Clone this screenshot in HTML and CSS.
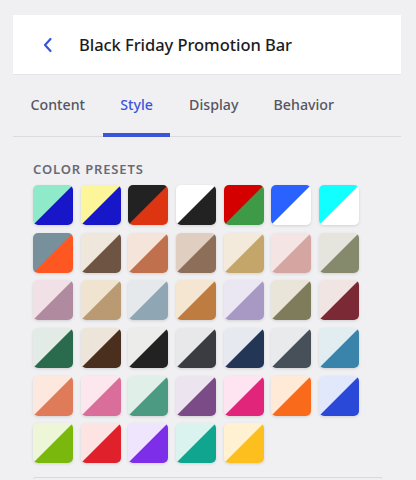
FILE: index.html
```html
<!DOCTYPE html>
<html>
<head>
<meta charset="utf-8">
<link rel="stylesheet" href="styles.css">
</head>
<body>
<div class="header">
  <svg class="back" width="12" height="16" viewBox="0 0 12 16"><path d="M8.5 2 L3 8 L8.5 14" fill="none" stroke="#3b55d9" stroke-width="2.2" stroke-linecap="round" stroke-linejoin="round"/></svg>
  <h1 class="title">Black Friday Promotion Bar</h1>
</div>
<div class="tabs">
  <div class="tab">Content</div>
  <div class="tab active">Style</div>
  <div class="tab">Display</div>
  <div class="tab">Behavior</div>
</div>
<div class="section">
  <div class="label">COLOR PRESETS</div>
  <div class="grid">
    <div class="sw" style="--a:#8eeac9;--b:#1717c9"></div>
    <div class="sw" style="--a:#fdf59a;--b:#1717c9"></div>
    <div class="sw" style="--a:#222222;--b:#dd3412"></div>
    <div class="sw" style="--a:#ffffff;--b:#222222"></div>
    <div class="sw" style="--a:#d40000;--b:#3f9a48"></div>
    <div class="sw" style="--a:#2962ff;--b:#ffffff"></div>
    <div class="sw" style="--a:#12ffff;--b:#ffffff"></div>

    <div class="sw" style="--a:#78909c;--b:#ff5722"></div>
    <div class="sw" style="--a:#efe6dc;--b:#6d5443"></div>
    <div class="sw" style="--a:#f5e4da;--b:#c0704c"></div>
    <div class="sw" style="--a:#e0cfc0;--b:#8d6e59"></div>
    <div class="sw" style="--a:#f3eadb;--b:#c4a66a"></div>
    <div class="sw" style="--a:#f5e4e4;--b:#d4a5a1"></div>
    <div class="sw" style="--a:#e5e5dd;--b:#848a6b"></div>

    <div class="sw" style="--a:#f1e1e6;--b:#b08a9e"></div>
    <div class="sw" style="--a:#f0e4d0;--b:#b99a72"></div>
    <div class="sw" style="--a:#e6e9ec;--b:#8fa6b4"></div>
    <div class="sw" style="--a:#f5e6d2;--b:#be7c40"></div>
    <div class="sw" style="--a:#eae6f2;--b:#a898c4"></div>
    <div class="sw" style="--a:#e9e5d8;--b:#7f7c5c"></div>
    <div class="sw" style="--a:#f1e5e4;--b:#7b2a35"></div>

    <div class="sw" style="--a:#e3ebe6;--b:#2b6b4d"></div>
    <div class="sw" style="--a:#ede4da;--b:#4a2f1f"></div>
    <div class="sw" style="--a:#ececea;--b:#222222"></div>
    <div class="sw" style="--a:#e8e8eb;--b:#3b3c41"></div>
    <div class="sw" style="--a:#e6eaf0;--b:#243656"></div>
    <div class="sw" style="--a:#e8eaec;--b:#474f58"></div>
    <div class="sw" style="--a:#e1edf1;--b:#3a84ab"></div>

    <div class="sw" style="--a:#fde8df;--b:#e07b5a"></div>
    <div class="sw" style="--a:#fde7ee;--b:#d96e9a"></div>
    <div class="sw" style="--a:#e0f0e8;--b:#4d9a83"></div>
    <div class="sw" style="--a:#ece4ee;--b:#7a4b87"></div>
    <div class="sw" style="--a:#fde4f0;--b:#e0257b"></div>
    <div class="sw" style="--a:#ffe9d7;--b:#fa6a1b"></div>
    <div class="sw" style="--a:#e2e8fb;--b:#2a49d8"></div>

    <div class="sw" style="--a:#eef6d8;--b:#7ab80e"></div>
    <div class="sw" style="--a:#fde4e2;--b:#e0202a"></div>
    <div class="sw" style="--a:#efe6fd;--b:#7c2ee8"></div>
    <div class="sw" style="--a:#daf3ee;--b:#0fa58f"></div>
    <div class="sw" style="--a:#fff1d2;--b:#fcbf1e"></div>
  </div>
  <div class="next-box"></div>
</div>
</body>
</html>
```
FILE: styles.css
```css
html, body {
  margin: 0;
  padding: 0;
}
body {
  background: #f0f0f3;
  font-family: "Noto Sans", "Open Sans", sans-serif;
  color: #1f1f24;
  width: 416px;
  height: 480px;
  overflow: hidden;
}
.header {
  margin: 15px 15px 0 13px;
  height: 59px;
  background: #ffffff;
  display: flex;
  align-items: center;
  padding-left: 29px;
  box-shadow: 0 1px 1px rgba(0,0,0,0.04);
}
.back {
  display: block;
  margin-top: 1px;
}
.title {
  margin: 0 0 0 25px;
  font-size: 16.5px;
  font-weight: 500;
  color: #1b1b22;
  letter-spacing: -0.05px;
}
.tabs {
  margin: 0 15px 0 13px;
  display: flex;
  padding-left: 1px;
  height: 62px;
  border-bottom: 1px solid #dadadf;
}
.tab {
  padding: 2px 17.6px 0;
  display: flex;
  align-items: center;
  font-size: 14.2px;
  font-weight: 500;
  color: #55555e;
  border-bottom: 4px solid transparent;
  margin-bottom: -1px;
}
.tab:first-child {
  padding-left: 16.5px;
}
.tab.active {
  color: #3b55d9;
  border-bottom-color: #3b55d9;
  margin-right: 1px;
}
.section {
  padding: 24px 36px 0 33px;
}
.label {
  font-size: 13px;
  font-weight: 600;
  letter-spacing: 0.85px;
  color: #6a6a73;
  line-height: 16px;
  margin-bottom: 8px;
}
.grid {
  display: grid;
  grid-template-columns: repeat(7, 40px);
  grid-auto-rows: 40px;
  gap: 7.7px;
}
.sw {
  border-radius: 5px;
  background: linear-gradient(to bottom right, var(--a) calc(50% - 0.4px), var(--b) calc(50% + 0.4px));
  box-shadow: 0 1px 3px rgba(0,0,0,0.13);
}
.next-box {
  margin-top: 14px;
  height: 1px;
  width: 347px;
  border: 1px solid #d8d8de;
  border-bottom: 0;
  border-radius: 6px 6px 0 0;
}
```
